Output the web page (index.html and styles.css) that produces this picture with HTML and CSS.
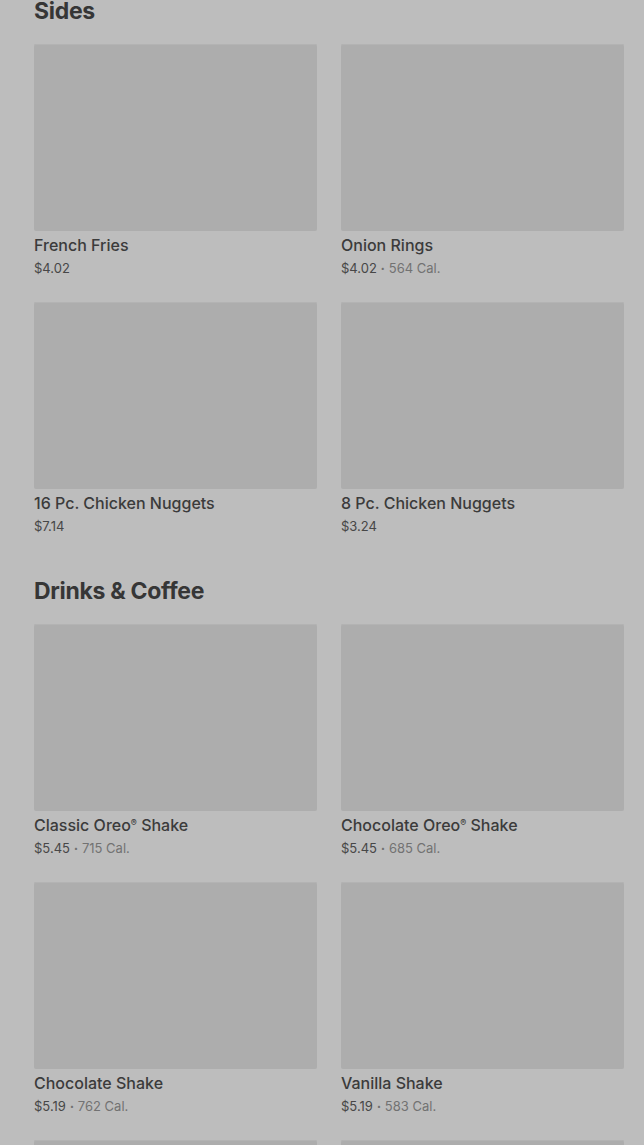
FILE: index.html
```html
<!DOCTYPE html>
<html lang="en">
<head>
<meta charset="utf-8">
<title>Menu</title>
<link rel="stylesheet" href="styles.css">
</head>
<body>
<main class="menu">
  <section class="section section-first">
    <h2 class="section-title">Sides</h2>
    <div class="grid">
      <div class="card"><div class="thumb"></div><div class="name">French Fries</div><div class="meta"><span class="price">$4.02</span></div></div>
      <div class="card"><div class="thumb"></div><div class="name">Onion Rings</div><div class="meta"><span class="price">$4.02</span><span class="dot">•</span><span class="cal">564 Cal.</span></div></div>
      <div class="card"><div class="thumb"></div><div class="name">16 Pc. Chicken Nuggets</div><div class="meta"><span class="price">$7.14</span></div></div>
      <div class="card"><div class="thumb"></div><div class="name">8 Pc. Chicken Nuggets</div><div class="meta"><span class="price">$3.24</span></div></div>
    </div>
  </section>
  <section class="section">
    <h2 class="section-title">Drinks &amp; Coffee</h2>
    <div class="grid">
      <div class="card"><div class="thumb"></div><div class="name">Classic Oreo<sup>®</sup> Shake</div><div class="meta"><span class="price">$5.45</span><span class="dot">•</span><span class="cal">715 Cal.</span></div></div>
      <div class="card"><div class="thumb"></div><div class="name">Chocolate Oreo<sup>®</sup> Shake</div><div class="meta"><span class="price">$5.45</span><span class="dot">•</span><span class="cal">685 Cal.</span></div></div>
      <div class="card"><div class="thumb"></div><div class="name">Chocolate Shake</div><div class="meta"><span class="price">$5.19</span><span class="dot">•</span><span class="cal">762 Cal.</span></div></div>
      <div class="card"><div class="thumb"></div><div class="name">Vanilla Shake</div><div class="meta"><span class="price">$5.19</span><span class="dot">•</span><span class="cal">583 Cal.</span></div></div>
      <div class="card"><div class="thumb"></div></div>
      <div class="card"><div class="thumb"></div></div>
    </div>
  </section>
</main>
</body>
</html>
```
FILE: styles.css
```css
html, body {
  margin: 0;
  padding: 0;
  background: #bdbdbd;
  height: 1145px;
  overflow: hidden;
}
.menu {
  padding: 0 20px 0 34px;
  font-family: Inter, "Liberation Sans", sans-serif;
}
.section-first {
  margin-top: -5px;
}
.section + .section {
  margin-top: 38px;
}
.section-title {
  margin: 0 0 17px;
  font-size: 23px;
  line-height: 32px;
  font-weight: 700;
  letter-spacing: -0.3px;
  color: #363636;
}
.grid {
  display: grid;
  grid-template-columns: 283px 283px;
  grid-auto-rows: 235px;
  column-gap: 24px;
  row-gap: 23px;
}
.card {
  display: flex;
  flex-direction: column;
}
.thumb {
  flex: none;
  height: 187px;
  background: #adadad;
  border-radius: 2px;
  box-shadow: inset 0 1px 0 #b3b3b3;
}
.name {
  margin-top: 4px;
  font-size: 16px;
  line-height: 20px;
  font-weight: 500;
  color: #3b3b3b;
}
.name sup {
  font-size: 9px;
  line-height: 0;
  vertical-align: 5px;
}
.meta {
  margin-top: 4px;
  font-size: 13px;
  line-height: 18px;
  color: #474747;
}
.dot {
  margin: 0 4px;
  font-size: 7px;
  vertical-align: 2px;
  color: #6f6f6f;
}
.cal {
  color: #727272;
}
```
